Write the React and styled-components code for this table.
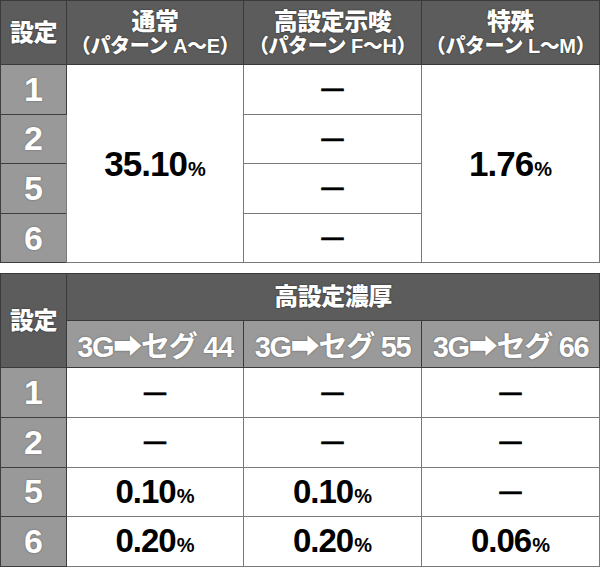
import React from "react";
import styled, { createGlobalStyle } from "styled-components";

const Global = createGlobalStyle`
  html, body { margin: 0; padding: 0; background: #ffffff; }
  body { font-family: "Liberation Sans", "Noto Sans CJK JP", sans-serif; }
`;

const Page = styled.div`
  width: 600px;
  display: flex;
  flex-direction: column;
  gap: 10px;
`;

const Table = styled.table`
  width: 599px;
  border-collapse: collapse;
  table-layout: fixed;
  border: 1px solid #6a6a6a;
`;

const Col = styled.col`
  width: ${(p) => p.$w}px;
`;

const HeadCell = styled.th`
  background: #5c5c5c;
  color: #ffffff;
  border: 1.5px solid #3a3a3a;
  height: ${(p) => p.$h || 63}px;
  padding: 0;
  text-align: center;
  vertical-align: middle;
  font-family: "Liberation Sans", "Noto Sans CJK JP", sans-serif;
  font-weight: 900;
  font-size: 24px;
  line-height: 26px;
  letter-spacing: -0.5px;
  text-shadow: 0 0 2px rgba(0, 0, 0, 0.6);
`;

const HeadSub = styled.span`
  display: block;
  font-size: 20px;
  line-height: 22px;
  letter-spacing: -0.4px;
`;

const SubHeadCell = styled.th`
  background: #9a9a9a;
  color: #ffffff;
  border: 1.5px solid #3a3a3a;
  height: 46px;
  padding: 0;
  text-align: center;
  vertical-align: middle;
  font-weight: 700;
  font-size: 29px;
  letter-spacing: -1.3px;
  text-shadow: 0 0 2px rgba(0, 0, 0, 0.45);
`;

const SettingCell = styled.th`
  background: #999999;
  color: #ffffff;
  border: 1.5px solid #3e3e3e;
  height: 48.6px;
  padding: 0;
  text-align: center;
  vertical-align: middle;
  font-weight: 700;
  font-size: 34px;
  text-shadow: 0 0 2px rgba(0, 0, 0, 0.4);
`;

const ValueCell = styled.td`
  background: #ffffff;
  color: #000000;
  border: 1.5px solid #7a7a7a;
  padding: 0;
  text-align: center;
  vertical-align: middle;
`;

const Value = styled.span`
  font-weight: 700;
  font-size: ${(p) => p.$size || 33}px;
  letter-spacing: -1px;
`;

const Pct = styled.span`
  font-weight: 700;
  font-size: 20px;
  letter-spacing: 0;
  margin-left: 1px;
`;

const Dash = styled.span`
  display: inline-block;
  font-weight: 700;
  font-size: 22px;
  line-height: 1;
  -webkit-text-stroke: 0.7px #000;
`;

const Rate = ({ v, size }) => (
  <Value $size={size}>
    {v}
    <Pct>%</Pct>
  </Value>
);

const D = () => <Dash>—</Dash>;

const cols = [66, 177, 178, 178];

export default function App() {
  const t2 = [
    ["1", <D />, <D />, <D />],
    ["2", <D />, <D />, <D />],
    ["5", <Rate v="0.10" />, <Rate v="0.10" />, <D />],
    ["6", <Rate v="0.20" />, <Rate v="0.20" />, <Rate v="0.06" />],
  ];
  return (
    <>
      <Global />
      <Page>
        <Table>
          <colgroup>
            {cols.map((w, i) => (
              <Col key={i} $w={w} />
            ))}
          </colgroup>
          <thead>
            <tr>
              <HeadCell>設定</HeadCell>
              <HeadCell>
                通常
                <HeadSub>（パターン A～E）</HeadSub>
              </HeadCell>
              <HeadCell>
                高設定示唆
                <HeadSub>（パターン F～H）</HeadSub>
              </HeadCell>
              <HeadCell>
                特殊
                <HeadSub>（パターン L～M）</HeadSub>
              </HeadCell>
            </tr>
          </thead>
          <tbody>
            <tr>
              <SettingCell>1</SettingCell>
              <ValueCell rowSpan={4}>
                <Rate v="35.10" size={35} />
              </ValueCell>
              <ValueCell>
                <D />
              </ValueCell>
              <ValueCell rowSpan={4}>
                <Rate v="1.76" size={35} />
              </ValueCell>
            </tr>
            {["2", "5", "6"].map((s) => (
              <tr key={s}>
                <SettingCell>{s}</SettingCell>
                <ValueCell>
                  <D />
                </ValueCell>
              </tr>
            ))}
          </tbody>
        </Table>

        <Table>
          <colgroup>
            {cols.map((w, i) => (
              <Col key={i} $w={w} />
            ))}
          </colgroup>
          <thead>
            <tr>
              <HeadCell rowSpan={2}>設定</HeadCell>
              <HeadCell colSpan={3} $h={46}>
                高設定濃厚
              </HeadCell>
            </tr>
            <tr>
              <SubHeadCell>3G➡セグ 44</SubHeadCell>
              <SubHeadCell>3G➡セグ 55</SubHeadCell>
              <SubHeadCell>3G➡セグ 66</SubHeadCell>
            </tr>
          </thead>
          <tbody>
            {t2.map((r) => (
              <tr key={r[0]}>
                <SettingCell>{r[0]}</SettingCell>
                <ValueCell>{r[1]}</ValueCell>
                <ValueCell>{r[2]}</ValueCell>
                <ValueCell>{r[3]}</ValueCell>
              </tr>
            ))}
          </tbody>
        </Table>
      </Page>
    </>
  );
}
